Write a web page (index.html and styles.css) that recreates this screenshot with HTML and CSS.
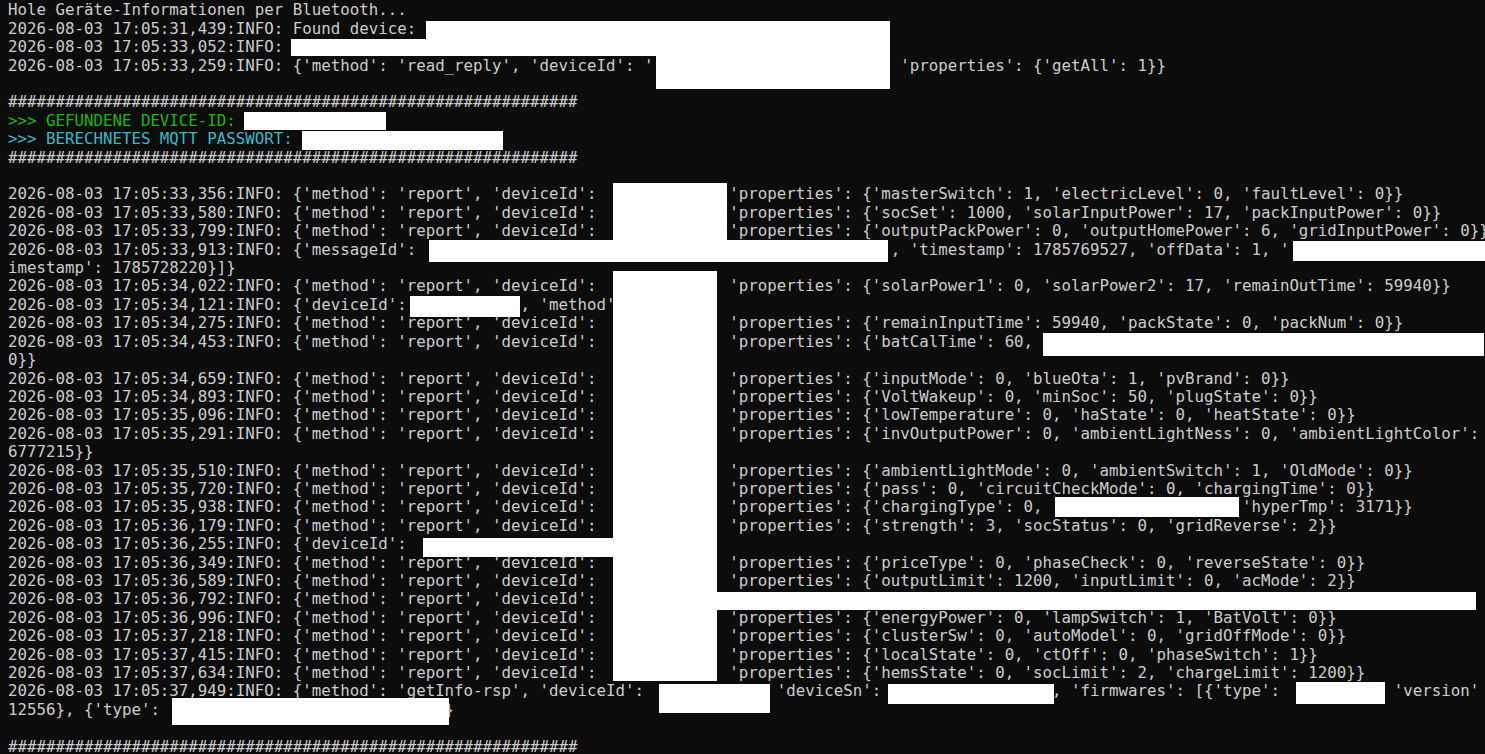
FILE: index.html
```html
<!DOCTYPE html>
<html lang="de">
<head>
<meta charset="utf-8">
<title>Terminal</title>
<link rel="stylesheet" href="styles.css">
</head>
<body>
<main class="screen">
<pre class="log">
Hole Geräte-Informationen per Bluetooth...
2026-08-03 17:05:31,439:INFO: Found device: 
2026-08-03 17:05:33,052:INFO: 
2026-08-03 17:05:33,259:INFO: {'method': 'read_reply', 'deviceId': '                          'properties': {'getAll': 1}}

############################################################
<span class="g">&gt;&gt;&gt; GEFUNDENE DEVICE-ID: </span>
<span class="c">&gt;&gt;&gt; BERECHNETES MQTT PASSWORT: </span>
############################################################

2026-08-03 17:05:33,356:INFO: {'method': 'report', 'deviceId':              'properties': {'masterSwitch': 1, 'electricLevel': 0, 'faultLevel': 0}}
2026-08-03 17:05:33,580:INFO: {'method': 'report', 'deviceId':              'properties': {'socSet': 1000, 'solarInputPower': 17, 'packInputPower': 0}}
2026-08-03 17:05:33,799:INFO: {'method': 'report', 'deviceId':              'properties': {'outputPackPower': 0, 'outputHomePower': 6, 'gridInputPower': 0}}
2026-08-03 17:05:33,913:INFO: {'messageId':                                                  , 'timestamp': 1785769527, 'offData': 1, '
imestamp': 1785728220}]}
2026-08-03 17:05:34,022:INFO: {'method': 'report', 'deviceId':              'properties': {'solarPower1': 0, 'solarPower2': 17, 'remainOutTime': 59940}}
2026-08-03 17:05:34,121:INFO: {'deviceId':            , 'method'
2026-08-03 17:05:34,275:INFO: {'method': 'report', 'deviceId':              'properties': {'remainInputTime': 59940, 'packState': 0, 'packNum': 0}}
2026-08-03 17:05:34,453:INFO: {'method': 'report', 'deviceId':              'properties': {'batCalTime': 60, 
0}}
2026-08-03 17:05:34,659:INFO: {'method': 'report', 'deviceId':              'properties': {'inputMode': 0, 'blueOta': 1, 'pvBrand': 0}}
2026-08-03 17:05:34,893:INFO: {'method': 'report', 'deviceId':              'properties': {'VoltWakeup': 0, 'minSoc': 50, 'plugState': 0}}
2026-08-03 17:05:35,096:INFO: {'method': 'report', 'deviceId':              'properties': {'lowTemperature': 0, 'haState': 0, 'heatState': 0}}
2026-08-03 17:05:35,291:INFO: {'method': 'report', 'deviceId':              'properties': {'invOutputPower': 0, 'ambientLightNess': 0, 'ambientLightColor':
6777215}}
2026-08-03 17:05:35,510:INFO: {'method': 'report', 'deviceId':              'properties': {'ambientLightMode': 0, 'ambientSwitch': 1, 'OldMode': 0}}
2026-08-03 17:05:35,720:INFO: {'method': 'report', 'deviceId':              'properties': {'pass': 0, 'circuitCheckMode': 0, 'chargingTime': 0}}
2026-08-03 17:05:35,938:INFO: {'method': 'report', 'deviceId':              'properties': {'chargingType': 0,                     'hyperTmp': 3171}}
2026-08-03 17:05:36,179:INFO: {'method': 'report', 'deviceId':              'properties': {'strength': 3, 'socStatus': 0, 'gridReverse': 2}}
2026-08-03 17:05:36,255:INFO: {'deviceId': 
2026-08-03 17:05:36,349:INFO: {'method': 'report', 'deviceId':              'properties': {'priceType': 0, 'phaseCheck': 0, 'reverseState': 0}}
2026-08-03 17:05:36,589:INFO: {'method': 'report', 'deviceId':              'properties': {'outputLimit': 1200, 'inputLimit': 0, 'acMode': 2}}
2026-08-03 17:05:36,792:INFO: {'method': 'report', 'deviceId': 
2026-08-03 17:05:36,996:INFO: {'method': 'report', 'deviceId':              'properties': {'energyPower': 0, 'lampSwitch': 1, 'BatVolt': 0}}
2026-08-03 17:05:37,218:INFO: {'method': 'report', 'deviceId':              'properties': {'clusterSw': 0, 'autoModel': 0, 'gridOffMode': 0}}
2026-08-03 17:05:37,415:INFO: {'method': 'report', 'deviceId':              'properties': {'localState': 0, 'ctOff': 0, 'phaseSwitch': 1}}
2026-08-03 17:05:37,634:INFO: {'method': 'report', 'deviceId':              'properties': {'hemsState': 0, 'socLimit': 2, 'chargeLimit': 1200}}
2026-08-03 17:05:37,949:INFO: {'method': 'getInfo-rsp', 'deviceId':              'deviceSn':                  , 'firmwares': [{'type':          , 'version'
12556}, {'type':                              }

############################################################
</pre>
<div class="redact r-a"></div>
<div class="redact r-b"></div>
<div class="redact r-c"></div>
<div class="redact r-d"></div>
<div class="redact r-e"></div>
<div class="redact r-f"></div>
<div class="redact r-g"></div>
<div class="redact r-h"></div>
<div class="redact r-i"></div>
<div class="redact r-j"></div>
<div class="redact r-k"></div>
<div class="redact r-l"></div>
<div class="redact r-m"></div>
<div class="redact r-n"></div>
<div class="redact r-o"></div>
<div class="redact r-p"></div>
<div class="redact r-q"></div>
<div class="redact r-r"></div>
</main>
</body>
</html>
```

FILE: styles.css
```css
html, body {
  margin: 0;
  padding: 0;
  background: #0c0c0c;
}

.screen {
  position: relative;
  width: 1485px;
  height: 754px;
  overflow: hidden;
  background: #0c0c0c;
}

.log {
  margin: 0;
  padding: 1.4px 0 0 8px;
  font-family: "DejaVu Sans Mono", "Liberation Mono", monospace;
  font-size: 15.78px;
  line-height: 18.4px;
  color: #cccccc;
  white-space: pre;
}

.g { color: #16b80f; }
.c { color: #3bb8c4; }

.redact {
  position: absolute;
  background: #ffffff;
}

.r-a { left: 426px; top: 21px; width: 464px; height: 18px; }
.r-b { left: 291px; top: 39px; width: 599px; height: 17px; }
.r-c { left: 656px; top: 56px; width: 234px; height: 33px; }
.r-d { left: 244px; top: 112px; width: 142px; height: 18px; }
.r-e { left: 302px; top: 131px; width: 201px; height: 19px; }
.r-f { left: 613px; top: 183px; width: 114px; height: 57px; }
.r-g { left: 429px; top: 240px; width: 459px; height: 22px; }
.r-h { left: 1293px; top: 241px; width: 192px; height: 20px; }
.r-i { left: 613px; top: 271px; width: 104px; height: 410px; }
.r-j { left: 410px; top: 296px; width: 110px; height: 21px; }
.r-k { left: 1043px; top: 333px; width: 441px; height: 23px; }
.r-l { left: 1055px; top: 497px; width: 184px; height: 20px; }
.r-m { left: 423px; top: 538px; width: 191px; height: 19px; }
.r-n { left: 717px; top: 592px; width: 759px; height: 18px; }
.r-o { left: 659px; top: 684px; width: 111px; height: 29px; }
.r-p { left: 888px; top: 684px; width: 166px; height: 20px; }
.r-q { left: 1296px; top: 682px; width: 89px; height: 22px; }
.r-r { left: 172px; top: 698px; width: 277px; height: 27px; }
```
